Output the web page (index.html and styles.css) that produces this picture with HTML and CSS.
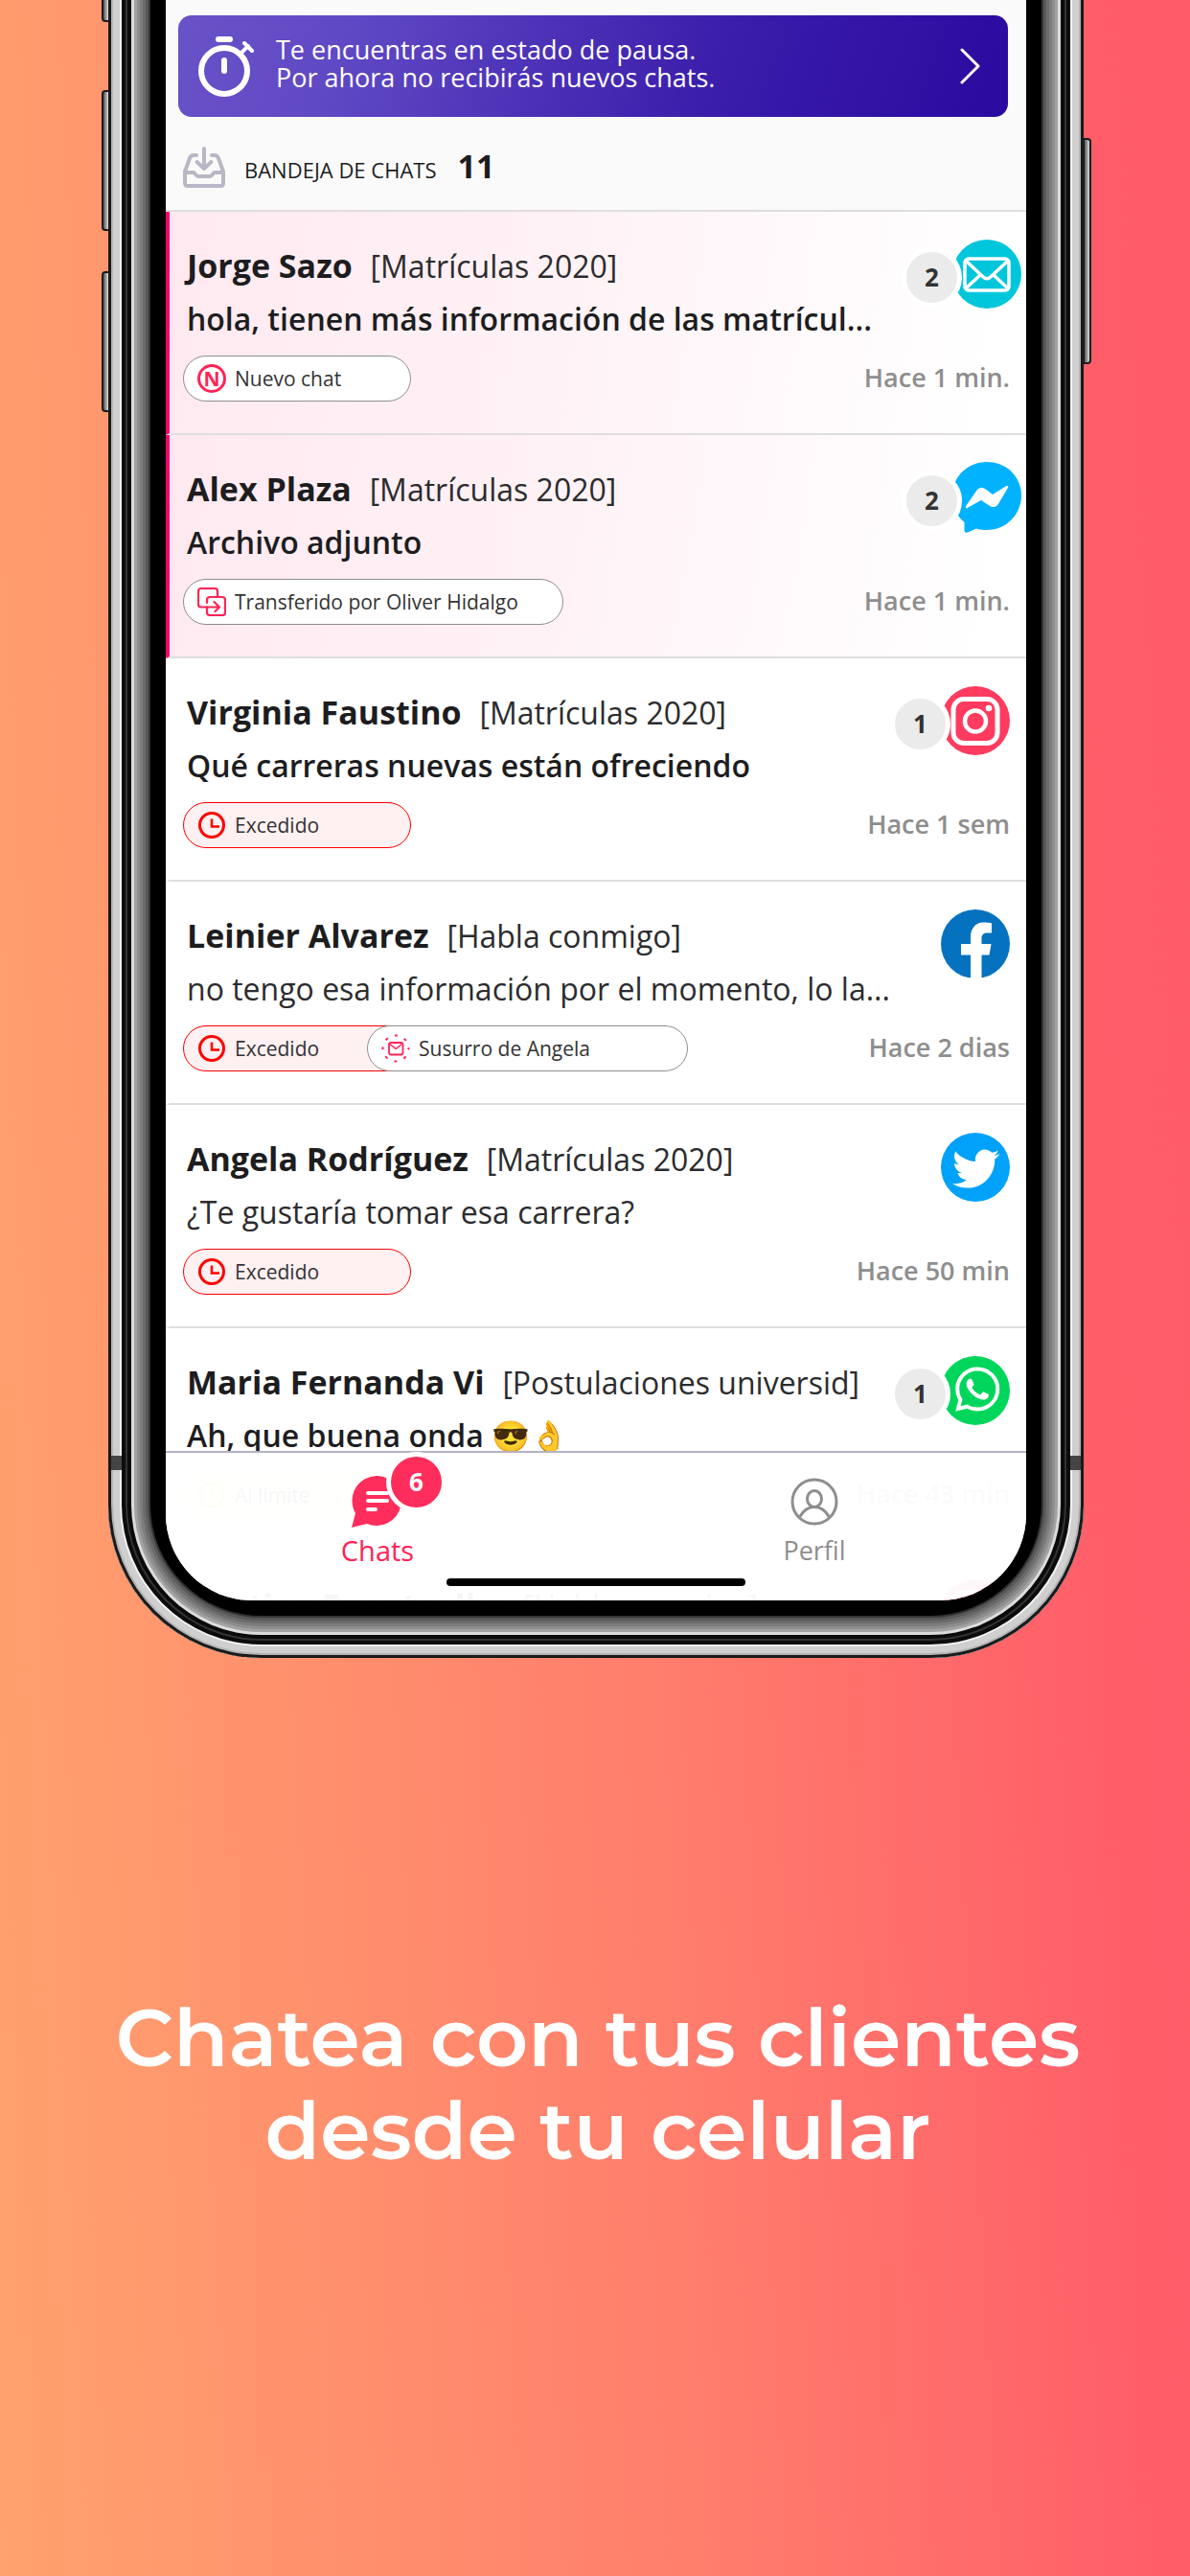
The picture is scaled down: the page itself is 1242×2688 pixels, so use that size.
FILE: index.html
```html
<!DOCTYPE html>
<html lang="es">
<head>
    <meta charset="UTF-8">
    <meta name="viewport" content="width=device-width, initial-scale=1.0">
    <title>Chatea con tus clientes</title>
    <link rel="stylesheet" href="styles.css">
</head>
<body>
    <!-- Shared icons -->
    <svg class="sprite" aria-hidden="true">
        <symbol id="clock" viewBox="0 0 30 30">
            <circle cx="15" cy="15" r="12.5" fill="none" stroke="currentColor" stroke-width="3"/>
            <path d="M15 8.500v8h8" fill="none" stroke="currentColor" stroke-width="2.500"/>
        </symbol>
        <symbol id="instagram" viewBox="0 0 72 72">
            <circle cx="36" cy="36" r="36" fill="#ff3b5f"/>
            <rect x="13" y="13.500" width="46" height="46" rx="11" fill="none" stroke="#fff" stroke-width="5"/>
            <circle cx="36" cy="36.500" r="11" fill="none" stroke="#fff" stroke-width="4.500"/>
            <circle cx="50" cy="23" r="3.300" fill="#fff"/>
        </symbol>
    </svg>

    <main class="promo">
        <div class="phone">
            <span class="side-button mute"></span>
            <span class="side-button volume-up"></span>
            <span class="side-button volume-down"></span>
            <span class="side-button power"></span>
            <span class="antenna left"></span>
            <span class="antenna right"></span>

            <div class="screen">
                <header class="inbox-header">
                    <a class="pause-banner" href="#">
                        <svg class="stopwatch" viewBox="0 0 60 66" aria-hidden="true">
                            <g fill="none" stroke="#fff" stroke-linecap="round">
                                <circle cx="28" cy="38" r="24" stroke-width="6"/>
                                <path d="M22 5h12M28 27v11" stroke-width="6"/>
                                <path d="M46 19l7-7M49 9l8 8" stroke-width="4"/>
                            </g>
                        </svg>
                        <p class="pause-text">Te encuentras en estado de pausa.<br>Por ahora no recibirás nuevos chats.</p>
                        <svg class="chevron" viewBox="0 0 22 38" aria-hidden="true">
                            <path d="M2 2l17 17L2 36" fill="none" stroke="#fff" stroke-width="3" stroke-linecap="round" stroke-linejoin="round"/>
                        </svg>
                    </a>
                    <div class="inbox-title">
                        <svg class="inbox-icon" viewBox="0 0 44 44" aria-hidden="true">
                            <g fill="none" stroke="#b9b7c6" stroke-width="4" stroke-linecap="round" stroke-linejoin="round">
                                <path d="M14 10h-3c-2 0-3 1-4 3L2 27v12c0 2 1 3 3 3h34c2 0 3-1 3-3V27l-5-14c-1-2-2-3-4-3h-3"/>
                                <path d="M2 28h9c2 0 2 4 5 4h12c3 0 3-4 5-4h9"/>
                                <path d="M22 3v19M14.500 17l7.500 7 7.500-7"/>
                            </g>
                        </svg>
                        <h2>BANDEJA DE CHATS</h2>
                        <strong>11</strong>
                    </div>
                </header>

                <ul class="chat-list">
                    <li class="chat new unread">
                        <div class="chat-top">
                            <div class="chat-text">
                                <h3>Jorge Sazo <span>[Matrículas 2020]</span></h3>
                                <p>hola, tienen más información de las matrícul...</p>
                            </div>
                            <div class="channel">
                                <span class="count">2</span>
                                <svg viewBox="0 0 72 72" aria-label="Correo">
                                    <circle cx="36" cy="36" r="36" fill="#00c6dc"/>
                                    <g fill="none" stroke="#fff" stroke-width="3.500" stroke-linejoin="round">
                                        <rect x="13" y="20" width="46" height="33" rx="4"/>
                                        <path d="M14 22l17.500 16.500q4.500 4.500 9 0L58 22M14 51l15-14M58 51L43 37"/>
                                    </g>
                                </svg>
                            </div>
                        </div>
                        <div class="chat-bottom">
                            <span class="chip"><span class="new-mark">N</span>Nuevo chat</span>
                            <time>Hace 1 min.</time>
                        </div>
                    </li>

                    <li class="chat new unread">
                        <div class="chat-top">
                            <div class="chat-text">
                                <h3>Alex Plaza <span>[Matrículas 2020]</span></h3>
                                <p>Archivo adjunto</p>
                            </div>
                            <div class="channel">
                                <span class="count">2</span>
                                <svg viewBox="0 0 72 74" aria-label="Messenger">
                                    <path d="M36 0c20 0 36 15 36 35S56 71 36 71c-4 0-8-.500-11-1.500L16 73.500q-3 1-3.500-2V63C4 56 0 47 0 35 0 15 16 0 36 0z" fill="#00b2ff"/>
                                    <path d="M15 47l11-16q3-5 8-1.500l8 6L57 26 47 43q-3 5-8 1.500l-9-6z" fill="#fff" stroke="#fff" stroke-width="2.500" stroke-linejoin="round"/>
                                </svg>
                            </div>
                        </div>
                        <div class="chat-bottom">
                            <span class="chip transferred">
                                <svg viewBox="0 0 30 30" aria-hidden="true">
                                    <g fill="none" stroke="#ff2456" stroke-width="2.200" stroke-linecap="round" stroke-linejoin="round">
                                        <path d="M10 20.500H4q-3 0-3-3V4q0-3 3-3h14q3 0 3 3v6"/>
                                        <path d="M10 16v-3q0-3 3-3h13q3 0 3 3v13q0 3-3 3H13q-3 0-3-3v-5.500h12M17.500 15l5.500 5.500-4.500 4.500"/>
                                    </g>
                                </svg>
                                Transferido por Oliver Hidalgo
                            </span>
                            <time>Hace 1 min.</time>
                        </div>
                    </li>

                    <li class="chat unread">
                        <div class="chat-top">
                            <div class="chat-text">
                                <h3>Virginia Faustino <span>[Matrículas 2020]</span></h3>
                                <p>Qué carreras nuevas están ofreciendo</p>
                            </div>
                            <div class="channel">
                                <span class="count">1</span>
                                <svg aria-label="Instagram"><use href="#instagram"/></svg>
                            </div>
                        </div>
                        <div class="chat-bottom">
                            <span class="chip exceeded"><svg aria-hidden="true"><use href="#clock"/></svg>Excedido</span>
                            <time>Hace 1 sem</time>
                        </div>
                    </li>

                    <li class="chat">
                        <div class="chat-top">
                            <div class="chat-text">
                                <h3>Leinier Alvarez <span>[Habla conmigo]</span></h3>
                                <p>no tengo esa información por el momento, lo la...</p>
                            </div>
                            <div class="channel">
                                <svg viewBox="0 0 72 72" aria-label="Facebook">
                                    <circle cx="36" cy="36" r="36" fill="#0572bf"/>
                                    <path d="M31 72V47.500H21V36h10v-8c0-9 6-14.500 13.500-14.500 3 0 6 .2 8.500.7v10.300h-5c-4 0-5.500 2.500-5.500 5.500v6H52.500l-2 11.500h-8V72z" fill="#fff"/>
                                </svg>
                            </div>
                        </div>
                        <div class="chat-bottom">
                            <span class="chip exceeded"><svg aria-hidden="true"><use href="#clock"/></svg>Excedido</span>
                            <span class="chip whisper">
                                <svg viewBox="0 0 30 30" aria-hidden="true">
                                    <g fill="none" stroke="#ff2456" stroke-linejoin="round">
                                        <rect x="8" y="9" width="14.500" height="12.500" rx="2" stroke-width="1.800"/>
                                        <path d="M9 10.500l6.200 5 6.200-5" stroke-width="1.600"/>
                                        <circle cx="15" cy="15" r="13.500" stroke-width="2" stroke-dasharray="3 7.600" stroke-dashoffset="1.500"/>
                                    </g>
                                </svg>
                                Susurro de Angela
                            </span>
                            <time>Hace 2 dias</time>
                        </div>
                    </li>

                    <li class="chat">
                        <div class="chat-top">
                            <div class="chat-text">
                                <h3>Angela Rodríguez <span>[Matrículas 2020]</span></h3>
                                <p>¿Te gustaría tomar esa carrera?</p>
                            </div>
                            <div class="channel">
                                <svg viewBox="0 0 72 72" aria-label="Twitter">
                                    <circle cx="36" cy="36" r="36" fill="#00a2f9"/>
                                    <path transform="translate(12 13) scale(2.050)" fill="#fff" d="M23.953 4.570a10 10 0 01-2.825.775 4.958 4.958 0 002.163-2.723c-.951.555-2.005.959-3.127 1.184a4.920 4.920 0 00-8.384 4.482C7.690 8.095 4.067 6.130 1.640 3.162a4.822 4.822 0 00-.666 2.475c0 1.710.870 3.213 2.188 4.096a4.904 4.904 0 01-2.228-.616v.060a4.923 4.923 0 003.946 4.827 4.996 4.996 0 01-2.212.085 4.936 4.936 0 004.604 3.417 9.867 9.867 0 01-6.102 2.105c-.390 0-.779-.023-1.170-.067a13.995 13.995 0 007.557 2.209c9.053 0 13.998-7.496 13.998-13.985 0-.210 0-.420-.015-.630A9.935 9.935 0 0024 4.590z"/>
                                </svg>
                            </div>
                        </div>
                        <div class="chat-bottom">
                            <span class="chip exceeded"><svg aria-hidden="true"><use href="#clock"/></svg>Excedido</span>
                            <time>Hace 50 min</time>
                        </div>
                    </li>

                    <li class="chat unread">
                        <div class="chat-top">
                            <div class="chat-text">
                                <h3>Maria Fernanda Vi <span>[Postulaciones universid]</span></h3>
                                <p>Ah, que buena onda 😎👌</p>
                            </div>
                            <div class="channel">
                                <span class="count">1</span>
                                <svg viewBox="0 0 72 72" aria-label="WhatsApp">
                                    <circle cx="36" cy="36" r="36" fill="#00d65b"/>
                                    <path transform="translate(15 11.500) scale(1.930)" fill="#fff" d="M17.472 14.382c-.297-.149-1.758-.867-2.030-.967-.273-.099-.471-.148-.670.150-.197.297-.767.966-.940 1.164-.173.199-.347.223-.644.075-.297-.150-1.255-.463-2.390-1.475-.883-.788-1.480-1.761-1.653-2.059-.173-.297-.018-.458.130-.606.134-.133.298-.347.446-.520.149-.174.198-.298.298-.497.099-.198.050-.371-.025-.520-.075-.149-.669-1.612-.916-2.207-.242-.579-.487-.500-.669-.510-.173-.008-.371-.010-.570-.010-.198 0-.520.074-.792.372-.272.297-1.040 1.016-1.040 2.479 0 1.462 1.065 2.875 1.213 3.074.149.198 2.096 3.200 5.077 4.487.709.306 1.262.489 1.694.625.712.227 1.360.195 1.871.118.571-.085 1.758-.719 2.006-1.413.248-.694.248-1.289.173-1.413-.074-.124-.272-.198-.570-.347m-5.421 7.403h-.004a9.870 9.870 0 01-5.031-1.378l-.361-.214-3.741.982.998-3.648-.235-.374a9.860 9.860 0 01-1.510-5.260c.001-5.450 4.436-9.884 9.888-9.884 2.640 0 5.122 1.030 6.988 2.898a9.825 9.825 0 012.893 6.994c-.003 5.450-4.437 9.884-9.885 9.884m8.413-18.297A11.815 11.815 0 0012.050 0C5.495 0 .160 5.335.157 11.892c0 2.096.547 4.142 1.588 5.945L.057 24l6.305-1.654a11.882 11.882 0 005.683 1.448h.005c6.554 0 11.890-5.335 11.893-11.893a11.821 11.821 0 00-3.480-8.413z"/>
                                </svg>
                            </div>
                        </div>
                        <div class="chat-bottom">
                            <span class="chip limit"><svg aria-hidden="true"><use href="#clock"/></svg>Al límite</span>
                            <time>Hace 43 min</time>
                        </div>
                    </li>

                    <!-- Only the top of this row peeks out under the tab bar -->
                    <li class="chat peek">
                        <div class="chat-top">
                            <div class="chat-text">
                                <h3>Cristian Fuentealba <span>[Habla conmigo]</span></h3>
                            </div>
                            <div class="channel">
                                <svg aria-label="Instagram"><use href="#instagram"/></svg>
                            </div>
                        </div>
                    </li>
                </ul>

                <nav class="tab-bar">
                    <a class="tab active" href="#">
                        <span class="tab-icon">
                            <svg viewBox="0 0 54 54" aria-hidden="true">
                                <path d="M27 0a26 26 0 1 1-11 50L0 54l4-15A26 26 0 0 1 27 0z" fill="#ff2d5b"/>
                                <path d="M17 18h20M17 26h20M17 35h8" stroke="#fff" stroke-width="4" stroke-linecap="round"/>
                            </svg>
                            <span class="tab-badge">6</span>
                        </span>
                        Chats
                    </a>
                    <a class="tab" href="#">
                        <span class="tab-icon">
                            <svg viewBox="0 0 54 54" aria-hidden="true">
                                <g fill="none" stroke="#8e8e8e" stroke-width="3">
                                    <circle cx="27" cy="27" r="23"/>
                                    <ellipse cx="27" cy="24" rx="7.500" ry="8.500"/>
                                    <path d="M11.500 43c4-7 9-10.500 15.500-10.500S38.500 36 42.500 43"/>
                                </g>
                            </svg>
                        </span>
                        Perfil
                    </a>
                    <span class="home-indicator"></span>
                </nav>
            </div>
        </div>

        <h1>Chatea con tus clientes<br>desde tu celular</h1>
    </main>
</body>
</html>
```
FILE: styles.css
```css
* {
    margin: 0;
    padding: 0;
    box-sizing: border-box;
}

body {
    font-family: "Open Sans", "Noto Sans", sans-serif;
    color: #1d1d1f;
    min-height: 100vh;
    background: linear-gradient(87deg, #ffa26e 0%, #ff7d6c 54%, #ff5f69 86%, #ff5a68 100%);
}

a {
    color: inherit;
    text-decoration: none;
}

svg {
    display: block;
    flex-shrink: 0;
}

.sprite {
    position: absolute;
    width: 0;
    height: 0;
}

/* Phone */
.phone {
    position: relative;
    margin: 0 111px 0 113px;
    padding: 0 60px 60px;
    background: #000;
    border-radius: 0 0 160px 160px;
}

/* metal frame, drawn as rings from the outside in */
.phone::before {
    content: "";
    position: absolute;
    top: -60px;
    left: 0;
    right: 0;
    bottom: 0;
    border-radius: 0 0 160px 160px;
    box-shadow:
        inset 0 0 0 3px #1a1a1a,
        inset 0 0 0 5px #b4b4b4,
        inset 0 0 0 12px #cfcfcf,
        inset 0 0 0 14px #f0f0f0,
        inset 0 0 0 18px #0c0c0c,
        inset 0 0 0 20px #333,
        inset 0 0 0 24px #0a0a0a,
        inset 0 0 0 27px #dcdcdc,
        inset 0 0 0 30px #a2a2a2,
        inset 0 0 0 33px #8e8e8e,
        inset 0 0 0 36px #7c7c7c,
        inset 0 0 0 39px #6b6b6b,
        inset 0 0 0 42px #585858,
        inset 0 0 0 44px #333;
}

.side-button {
    position: absolute;
    width: 9px;
    border: 2px solid #1c1c1c;
    background: linear-gradient(90deg, #555, #ddd);
}

.side-button.mute,
.side-button.volume-up,
.side-button.volume-down {
    left: -7px;
    border-radius: 4px 0 0 4px;
}

.side-button.mute {
    top: -20px;
    height: 43px;
}

.side-button.volume-up {
    top: 94px;
    height: 147px;
}

.side-button.volume-down {
    top: 283px;
    height: 147px;
}

.side-button.power {
    top: 144px;
    right: -8px;
    height: 236px;
    border-radius: 0 4px 4px 0;
}

.antenna {
    position: absolute;
    bottom: 196px;
    width: 11px;
    height: 15px;
    background: #444;
}

.antenna.left {
    left: 3px;
}

.antenna.right {
    right: 3px;
}

.screen {
    position: relative;
    overflow: hidden;
    background: #fff;
    border-radius: 0 0 90px 90px;
}

/* Header */
.inbox-header {
    padding: 16px 19px 0 13px;
    background: #fafafa;
    border-bottom: 2px solid #dedede;
}

.pause-banner {
    display: flex;
    align-items: center;
    height: 106px;
    padding: 0 28px 0 20px;
    border-radius: 14px;
    background: linear-gradient(110deg, #6a52c8 0%, #6049c4 20%, #3a1dab 65%, #2a0a9f 100%);
    color: #fff;
}

.stopwatch {
    width: 60px;
    height: 66px;
}

.pause-text {
    flex: 1;
    margin: 0 0 6px 22px;
    font-size: 27px;
    line-height: 29px;
}

.chevron {
    width: 22px;
    height: 38px;
}

.inbox-title {
    display: flex;
    align-items: baseline;
    height: 97px;
    padding: 28px 5px 0;
}

.inbox-icon {
    width: 44px;
    height: 44px;
    margin-top: 2px;
    align-self: flex-start;
}

.inbox-title h2 {
    margin-left: 20px;
    font-size: 22px;
    font-weight: 500;
}

.inbox-title strong {
    margin-left: 22px;
    font-size: 34px;
    font-weight: 700;
}

/* Chat list */
.chat-list {
    list-style: none;
}

.chat {
    padding: 28px 17px 33px 18px;
    border-bottom: 2px solid #dedede;
    border-left: 4px solid transparent;
}

.chat.new {
    border-left-color: #f5006e;
    background: linear-gradient(100deg, #ffe9f0 0%, #fff2f6 45%, #fff 95%);
}

.chat-top {
    display: flex;
    justify-content: space-between;
}

.chat-text {
    line-height: 56px;
    white-space: nowrap;
}

.chat h3 {
    font-size: 34px;
    font-weight: 700;
}

.chat h3 span {
    margin-left: 10px;
    font-size: 32px;
    font-weight: 400;
    line-height: 1;
}

.chat p {
    font-size: 32px;
    font-weight: 400;
}

.chat h3 span,
.chat p {
    color: #2c2c2e;
}

.chat.unread p {
    color: #1d1d1f;
    font-weight: 600;
}

.channel {
    display: flex;
    align-items: flex-start;
}

.chat.new .channel {
    margin-right: -12px;
}

.channel svg {
    width: 72px;
    height: 74px;
}

.count {
    z-index: 1;
    width: 63px;
    height: 63px;
    margin: 9px -10px 0 0;
    border: 5px solid #fff;
    border-radius: 50%;
    background: #ebebeb;
    color: #333;
    font-size: 26px;
    font-weight: 700;
    line-height: 53px;
    text-align: center;
}

.chat-bottom {
    display: flex;
    align-items: center;
    margin: 10px 0 0 -4px;
}

.chip {
    display: flex;
    align-items: center;
    gap: 9px;
    width: 238px;
    height: 48px;
    padding-left: 14px;
    border: 1px solid #8e8e8e;
    border-radius: 24px;
    background: #fff;
    color: #333;
    font-size: 21px;
    white-space: nowrap;
}

.chip svg {
    width: 30px;
    height: 30px;
}

.new-mark {
    width: 30px;
    height: 30px;
    border: 3px solid #ff2456;
    border-radius: 50%;
    color: #ff2456;
    font-weight: 700;
    line-height: 24px;
    text-align: center;
}

.chip.transferred {
    width: 397px;
}

.chip.whisper {
    width: 335px;
    margin-left: -46px;
}

.chip.exceeded {
    border-color: #f00;
    background: #fff0f1;
}

.chip.exceeded svg {
    color: #f00;
}

.chip.limit {
    border-color: #ffd24a;
    background: #fff9e0;
}

.chip.limit svg {
    color: #ffc800;
}

.chat time {
    margin: 0 0 4px auto;
    color: #8e8e8e;
    font-size: 27px;
    font-weight: 600;
}

.chat.peek {
    height: 51px;
    padding-bottom: 0;
    overflow: hidden;
    border-bottom: 0;
}

/* Tab bar */
.tab-bar {
    position: absolute;
    left: 0;
    right: 0;
    bottom: 0;
    display: grid;
    grid-template-columns: 1fr 1fr;
    column-gap: 14px;
    height: 156px;
    padding-top: 24px;
    border-top: 2px solid #b3b2c2;
    background: rgba(255, 255, 255, 0.96);
}

.tab {
    display: flex;
    flex-direction: column;
    align-items: center;
    color: #8e8e8e;
    font-size: 27px;
    line-height: 48px;
}

.tab.active {
    color: #ff2456;
    font-size: 29px;
}

.tab-icon {
    position: relative;
}

.tab-icon svg {
    width: 54px;
    height: 54px;
}

.tab-badge {
    position: absolute;
    top: -25px;
    left: 36px;
    width: 63px;
    height: 63px;
    border: 5px solid #fff;
    border-radius: 50%;
    background: #ff2d5b;
    color: #fff;
    font-size: 26px;
    font-weight: 700;
    line-height: 53px;
    text-align: center;
}

.home-indicator {
    position: absolute;
    left: 50%;
    bottom: 15px;
    width: 312px;
    height: 8px;
    margin-left: -156px;
    border-radius: 4px;
    background: #000;
}

/* Headline */
h1 {
    margin: 348px 0 0 6px;
    color: #fff;
    font-family: Montserrat, Inter, sans-serif;
    font-size: 84px;
    font-weight: 600;
    line-height: 97px;
    text-align: center;
}
```
